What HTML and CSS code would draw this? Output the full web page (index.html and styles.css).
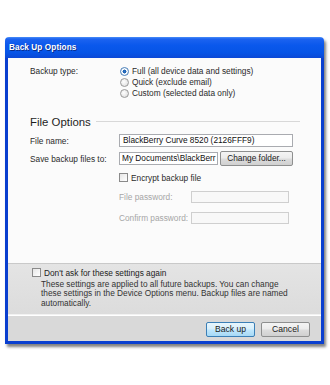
FILE: index.html
```html
<!DOCTYPE html>
<html>
<head>
<meta charset="utf-8">
<link rel="stylesheet" href="styles.css">
</head>
<body>
<div class="window">
  <div class="titlebar">Back Up Options</div>
  <div class="client">
    <div class="main">
      <div class="type-row">
        <span class="label">Backup type:</span>
        <div class="radios">
          <div class="radio"><span class="rb on"></span>Full (all device data and settings)</div>
          <div class="radio"><span class="rb"></span>Quick (exclude email)</div>
          <div class="radio"><span class="rb"></span>Custom (selected data only)</div>
        </div>
      </div>
      <div class="section-head"><span class="head-text">File Options</span><span class="rule"></span></div>
      <div class="row row-name">
        <span class="label">File name:</span>
        <span class="input name-input">BlackBerry Curve 8520 (2126FFF9)</span>
      </div>
      <div class="row row-path">
        <span class="label">Save backup files to:</span>
        <span class="input path-input">My Documents\BlackBerr</span>
        <span class="btn folder-btn">Change folder...</span>
      </div>
      <div class="row row-encrypt">
        <span class="label"></span>
        <span class="check"><span class="cb"></span>Encrypt backup file</span>
      </div>
      <div class="row row-pass">
        <span class="label"></span>
        <span class="dis-label">File password:</span>
        <span class="input dis-input"></span>
      </div>
      <div class="row row-confirm">
        <span class="label"></span>
        <span class="dis-label">Confirm password:</span>
        <span class="input dis-input"></span>
      </div>
    </div>
    <div class="notice">
      <div class="check notice-check"><span class="cb"></span>Don't ask for these settings again</div>
      <p class="desc">These settings are applied to all future backups. You can change these settings in the Device Options menu. Backup files are named automatically.</p>
    </div>
    <div class="buttons">
      <span class="btn dlg-btn default">Back up</span>
      <span class="btn dlg-btn">Cancel</span>
    </div>
  </div>
</div>
</body>
</html>
```

FILE: styles.css
```css
html, body {
  margin: 0;
  padding: 0;
  background: #ffffff;
}
body {
  width: 330px;
  height: 385px;
  overflow: hidden;
  font-family: "Liberation Sans", Arial, sans-serif;
  font-size: 8.3px;
  color: #2a2a2a;
}
.window {
  margin-top: 37px;
  margin-left: 5px;
  width: 319px;
  box-shadow: 2px 3px 3px rgba(0, 0, 0, 0.5);
  border-radius: 4px 4px 0 0;
}
.titlebar {
  height: 21px;
  box-sizing: border-box;
  padding-left: 4px;
  line-height: 21px;
  color: #ffffff;
  font-weight: bold;
  font-size: 8.2px;
  letter-spacing: 0.1px;
  border-radius: 4px 4px 0 0;
  background: linear-gradient(#4a8ef8 0, #1c63f0 2px, #0a58ec 40%, #0654e6 75%, #0b48d6 100%);
  text-shadow: 1px 1px 0 #0a2c8a;
}
.client {
  border: 3px solid #0a3fcf;
  border-top: none;
  box-shadow: inset 1px 0 0 #4f86ec, inset -1px 0 0 #4f86ec, inset 0 -1px 0 #4f86ec;
  background: #fafafa;
}
.main {
  height: 205px;
  box-sizing: border-box;
  padding: 8px 21px 0 22px;
  background: #fbfbfb;
}
.label {
  width: 89px;
  flex: none;
}
.type-row {
  display: flex;
  line-height: 11px;
}
.radio {
  display: flex;
  align-items: center;
  height: 11px;
}
.rb {
  width: 7px;
  height: 7px;
  border-radius: 50%;
  border: 1px solid #9a9a9a;
  background: radial-gradient(circle at 40% 40%, #ffffff 0, #e4e4e4 70%, #cfcfcf 100%);
  margin-right: 3px;
  margin-left: 1px;
  box-sizing: content-box;
}
.rb.on {
  border-color: #4a7fb8;
  background: radial-gradient(circle, #2b73c8 0, #1c5fae 35%, #ffffff 45%, #dce8f4 100%);
}
.section-head {
  display: flex;
  align-items: center;
  margin-top: 14px;
  height: 17px;
}
.head-text {
  font-size: 11.4px;
  color: #1e1e1e;
}
.rule {
  flex: 1;
  border-top: 1px solid #d8d8d8;
  margin-left: 5px;
}
.row {
  display: flex;
  align-items: center;
}
.row-name {
  margin-top: 4px;
  height: 13px;
}
.input {
  box-sizing: border-box;
  height: 13px;
  line-height: 11px;
  border: 1px solid #a9abb0;
  background: #ffffff;
  padding-left: 3px;
  white-space: nowrap;
  overflow: hidden;
  color: #111;
}
.name-input {
  width: 174px;
}
.row-path {
  margin-top: 4px;
  height: 15px;
}
.path-input {
  width: 99px;
  padding-left: 2px;
}
.btn {
  box-sizing: border-box;
  border: 1px solid #8e8f8f;
  border-radius: 2px;
  background: linear-gradient(#f4f4f4 0, #ececec 45%, #dcdcdc 55%, #d0d0d0 100%);
  text-align: center;
  color: #1a1a1a;
}
.folder-btn {
  margin-left: 2px;
  width: 73px;
  height: 15px;
  line-height: 13px;
}
.row-encrypt {
  margin-top: 6px;
  height: 11px;
}
.check {
  display: flex;
  align-items: center;
}
.cb {
  width: 7px;
  height: 7px;
  border: 1px solid #8a8a8a;
  background: linear-gradient(135deg, #e6e6e6, #ffffff);
  margin-right: 3px;
  box-sizing: content-box;
}
.row-pass {
  margin-top: 8px;
  height: 12px;
}
.row-confirm {
  margin-top: 9px;
  height: 12px;
}
.dis-label {
  width: 72px;
  flex: none;
  color: #a6a6a6;
}
.dis-input {
  width: 98px;
  height: 12px;
  border-color: #cfcfcf;
  background: #f8f8f8;
}
.notice {
  height: 51px;
  box-sizing: border-box;
  border-top: 1px solid #c9c9c9;
  background: linear-gradient(#e4e4e4, #dcdcdc);
  padding: 3px 10px 0 24px;
}
.notice-check {
  height: 11px;
  color: #222;
}
.desc {
  margin: 2px 0 0 9px;
  line-height: 9.4px;
  color: #333;
  width: 254px;
}
.buttons {
  height: 27px;
  box-sizing: border-box;
  border-top: 1px solid #f2f2f2;
  box-shadow: inset 0 1px 0 #ffffff;
  background: #d9d9d9;
  display: flex;
  justify-content: flex-end;
  align-items: flex-start;
  gap: 6px;
  padding: 7px 11px 0 0;
}
.dlg-btn {
  width: 49px;
  height: 15px;
  line-height: 13px;
  font-size: 8.6px;
}
.dlg-btn.default {
  border-color: #3b7fb6;
  background: linear-gradient(#e8f6fd 0, #d8effb 45%, #bee6fd 55%, #a7d9f5 100%);
}
```
